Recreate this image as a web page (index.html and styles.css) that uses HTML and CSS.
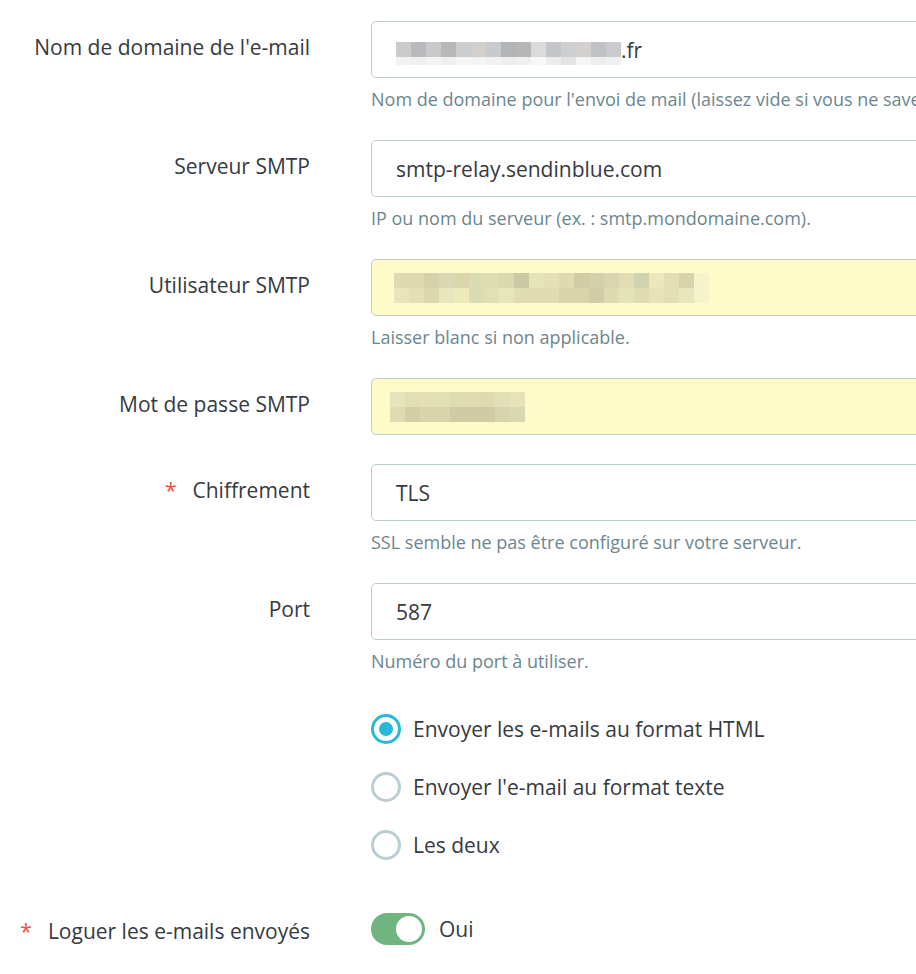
FILE: index.html
```html
<!DOCTYPE html>
<html lang="fr">

<head>
    <meta charset="UTF-8">
    <meta name="viewport" content="width=device-width, initial-scale=1.0">
    <title>E-mail</title>
    <link rel="stylesheet" href="styles.css">
</head>

<body>
    <form class="mail-form">
        <div class="form-group">
            <label class="control-label">Nom de domaine de l'e-mail</label>
            <div class="field">
                <div class="form-control">
                    <span class="mosaic mosaic-domain" data-set="domain"></span><span>.fr</span>
                </div>
                <p class="help">Nom de domaine pour l'envoi de mail (laissez vide si vous ne savez pas)</p>
            </div>
        </div>

        <div class="form-group">
            <label class="control-label">Serveur SMTP</label>
            <div class="field">
                <div class="form-control">smtp-relay.sendinblue.com</div>
                <p class="help">IP ou nom du serveur (ex. : smtp.mondomaine.com).</p>
            </div>
        </div>

        <div class="form-group">
            <label class="control-label">Utilisateur SMTP</label>
            <div class="field">
                <div class="form-control autofill">
                    <span class="mosaic" data-set="user"></span>
                </div>
                <p class="help">Laisser blanc si non applicable.</p>
            </div>
        </div>

        <div class="form-group">
            <label class="control-label">Mot de passe SMTP</label>
            <div class="field">
                <div class="form-control autofill">
                    <span class="mosaic mosaic-pass" data-set="pass"></span>
                </div>
            </div>
        </div>

        <div class="form-group">
            <label class="control-label"><span class="required">*</span>Chiffrement</label>
            <div class="field">
                <div class="form-control">TLS</div>
                <p class="help">SSL semble ne pas être configuré sur votre serveur.</p>
            </div>
        </div>

        <div class="form-group">
            <label class="control-label">Port</label>
            <div class="field">
                <div class="form-control">587</div>
                <p class="help">Numéro du port à utiliser.</p>
            </div>
        </div>

        <div class="form-group">
            <span></span>
            <div class="radio-list">
                <div class="radio-item"><span class="radio checked"></span>Envoyer les e-mails au format HTML</div>
                <div class="radio-item"><span class="radio"></span>Envoyer l'e-mail au format texte</div>
                <div class="radio-item"><span class="radio"></span>Les deux</div>
            </div>
        </div>

        <div class="form-group switch-group">
            <label class="control-label"><span class="required">*</span>Loguer les e-mails envoyés</label>
            <div class="switch-field">
                <span class="switch"><span class="knob"></span></span>
                <span>Oui</span>
            </div>
        </div>
    </form>

    <script>
        // pixelated (blurred) values, one colour per cell, top row then bottom row
        const mosaics = {
            domain: [
                ['#cbcbcb', '#b9babd', '#c9c9cb', '#b8b8b8', '#cccdcf', '#d2cfcd', '#c8cacd', '#b2b5b8', '#b6b6b6', '#dadbdd', '#c4c5c8', '#cecfd1', '#d3d0cf', '#c1c2c5', '#cacbce'],
                ['#f2f2f2', '#f0f0f0', '#f3f3f3', '#efefef', '#f5f5f5', '#f4f4f4', '#f1f1f1', '#eeeeee', '#f0f0f0', '#f7f7f7', '#ededed', '#e4e4e4', '#f5f5f5', '#eeeeee', '#f0f0f0']
            ],
            user: [
                ['#dedbb0', '#dddaaf', '#d5d1a8', '#d8d9b2', '#dad6ab', '#dadcb3', '#dedcb1', '#dcd8ae', '#c9c9a5', '#e6e3b9', '#e3e0b5', '#dedbb1', '#d1cca4', '#d1d1aa', '#d9d5ae', '#e1ddb4', '#d1d3ae', '#ebe8bf', '#e2dfb5', '#d8d3a9', '#f5f3cc'],
                ['#e8e5bd', '#e3e0b5', '#dcd8ae', '#e8e6bc', '#ece9bb', '#dadcb2', '#e2dfb5', '#e7e6bb', '#e0ddb3', '#dfdcb1', '#e0ddb2', '#d8d5ab', '#d8d5ab', '#cfcca6', '#dedab1', '#e4e2b8', '#dfdcb2', '#e6e3b9', '#e2dfb6', '#e8e6bd', '#f5f3cc']
            ],
            pass: [
                ['#e6e4ba', '#e2dfb3', '#e3e0b6', '#e1dfb4', '#dfdcb1', '#dfdcb1', '#dedbb0', '#e2e0b6', '#e6e3b9'],
                ['#dfdcb1', '#d2cfa6', '#d8d4ab', '#d8d4ab', '#cfcba4', '#cfcba4', '#cfcba4', '#d6d6ae', '#dad8b0']
            ]
        };

        document.querySelectorAll('.mosaic').forEach(el => {
            const rows = mosaics[el.dataset.set];
            rows.forEach(row => {
                const line = document.createElement('span');
                line.className = 'mosaic-row';
                row.forEach(color => {
                    const cell = document.createElement('span');
                    cell.className = 'mosaic-cell';
                    cell.style.background = color;
                    line.appendChild(cell);
                });
                el.appendChild(line);
            });
        });
    </script>
</body>

</html>
```

FILE: styles.css
```css
html,
body {
    margin: 0;
    padding: 0;
    overflow: hidden;
}

body {
    font-family: "Open Sans", "Noto Sans", sans-serif;
    color: #363a41;
    background-color: #fff;
}

.mail-form {
    padding-top: 21px;
    overflow: hidden;
}

.form-group {
    display: grid;
    grid-template-columns: 310px 1fr;
    column-gap: 61px;
    margin-bottom: 29px;
}

.field {
    overflow: hidden;
}

.control-label {
    text-align: right;
    font-size: 21px;
    line-height: 28px;
    padding-top: 12px;
}

.required {
    color: #f54c3e;
    margin-right: 16px;
}

.form-control {
    box-sizing: border-box;
    width: 640px;
    height: 57px;
    border: 1px solid #bbcdd2;
    border-radius: 5px;
    padding: 0 24px;
    display: flex;
    align-items: center;
    font-size: 21px;
    background-color: #fff;
}

.form-control.autofill {
    background-color: #fffbc8;
}

.help {
    margin: 10px 0 0;
    font-size: 18px;
    line-height: 23px;
    color: #6c868e;
    white-space: nowrap;
}

.mosaic {
    display: flex;
    flex-direction: column;
    margin-left: -2px;
}

.mosaic-domain {
    margin-top: 8px;
    margin-left: 0;
}

.mosaic-domain .mosaic-row:last-child .mosaic-cell {
    height: 8px;
}

.mosaic-pass {
    margin-left: -6px;
}

.mosaic-row {
    display: flex;
}

.mosaic-cell {
    width: 15px;
    height: 15px;
}

.radio-list {
    display: flex;
    flex-direction: column;
    gap: 28px;
    padding-top: 12px;
}

.radio-item {
    display: flex;
    align-items: center;
    gap: 12px;
    font-size: 21px;
    line-height: 29px;
}

.radio {
    box-sizing: border-box;
    width: 30px;
    height: 30px;
    border: 3px solid #bbcdd2;
    border-radius: 50%;
    display: flex;
    justify-content: center;
    align-items: center;
}

.radio.checked {
    border-color: #25b9d7;
}

.radio.checked::after {
    content: "";
    width: 14px;
    height: 14px;
    border-radius: 50%;
    background-color: #25b9d7;
}

.switch-group {
    margin-top: 53px;
    align-items: center;
}

.switch-group .control-label {
    padding-top: 4px;
}

.switch-field {
    display: flex;
    align-items: center;
    gap: 14px;
    font-size: 21px;
}

.switch {
    box-sizing: border-box;
    width: 54px;
    height: 32px;
    border-radius: 16px;
    background-color: #70b580;
    padding: 3px;
    display: flex;
    justify-content: flex-end;
}

.knob {
    width: 26px;
    height: 26px;
    border-radius: 50%;
    background-color: #fff;
}
```
